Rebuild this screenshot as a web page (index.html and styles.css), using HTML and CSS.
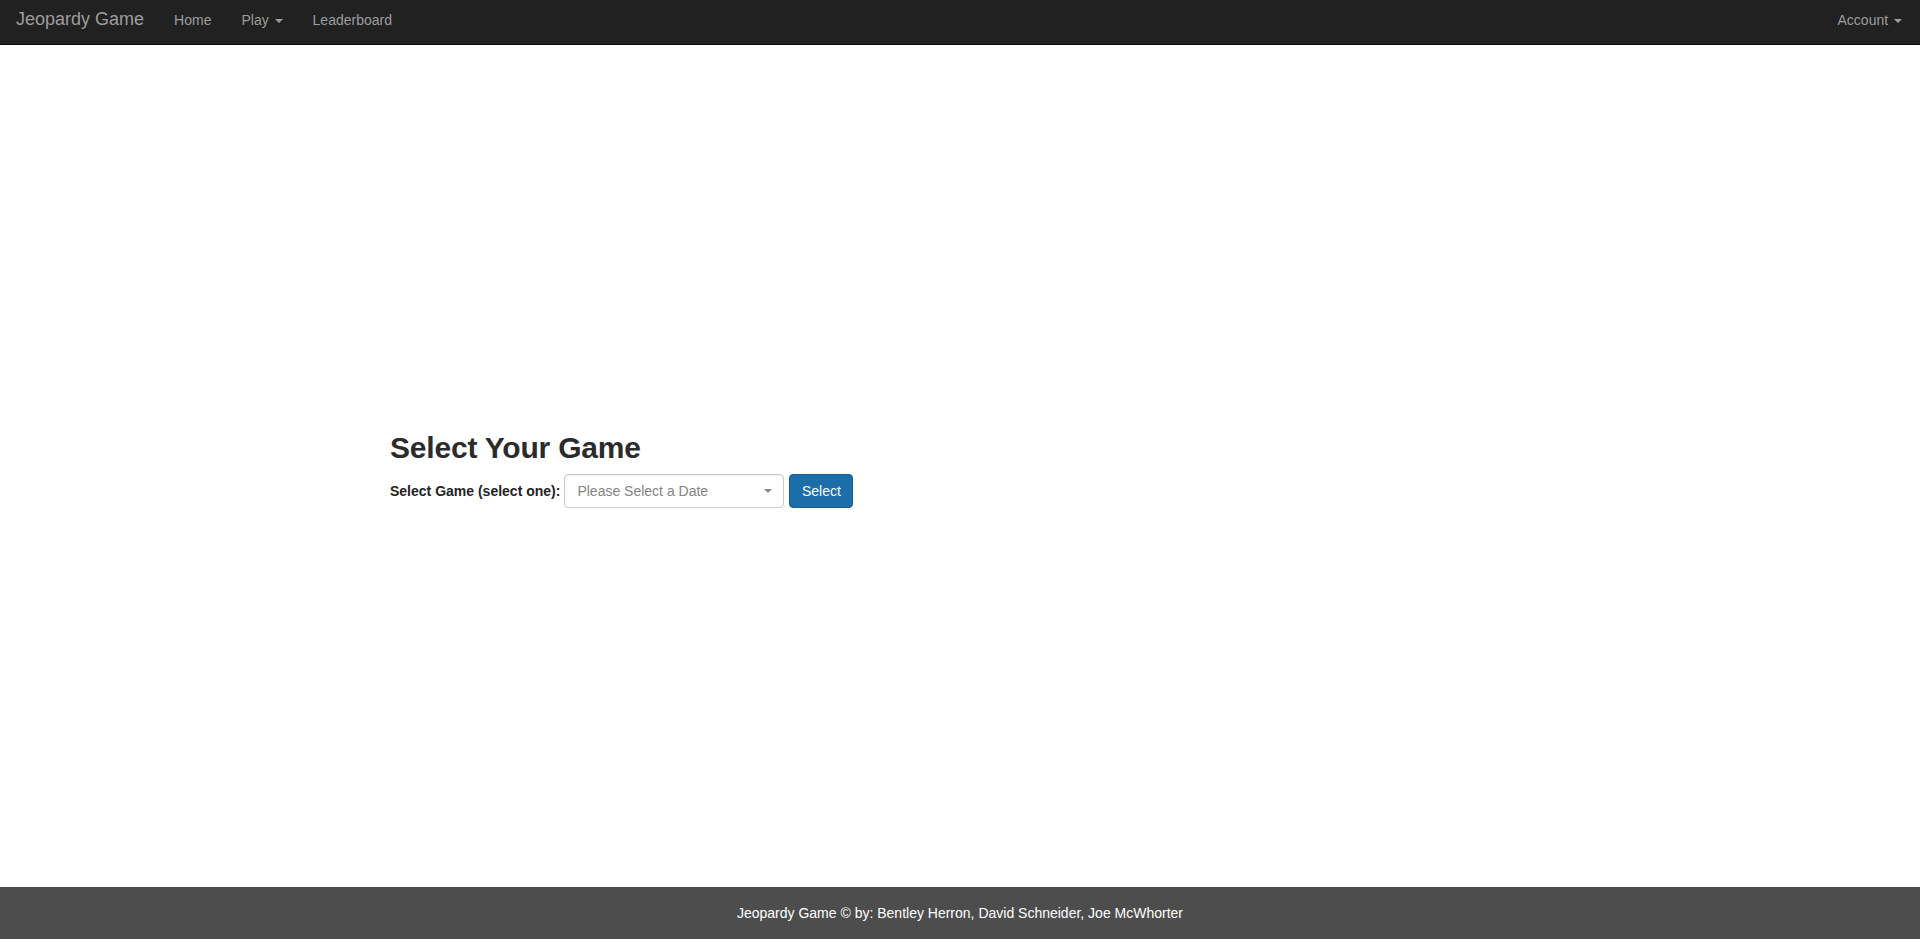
FILE: index.html
```html
<!DOCTYPE html>
<html lang="en">
<head>
<meta charset="utf-8">
<title>Jeopardy Game</title>
<link rel="stylesheet" href="styles.css">
</head>
<body>
<div class="page">
  <nav class="navbar">
    <div class="nav-left">
      <a class="brand" href="#">Jeopardy Game</a>
      <a class="nav-link" href="#">Home</a>
      <a class="nav-link" href="#">Play <span class="caret"></span></a>
      <a class="nav-link" href="#">Leaderboard</a>
    </div>
    <div class="nav-right">
      <a class="nav-link" href="#">Account <span class="caret"></span></a>
    </div>
  </nav>
  <main class="main">
    <div class="container">
      <h2 class="title">Select Your Game</h2>
      <form class="game-form">
        <label class="form-label" for="game">Select Game (select one):</label>
        <span class="select-wrap">
          <select id="game" class="select">
            <option>Please Select a Date</option>
          </select>
        </span>
        <button type="button" class="btn">Select</button>
      </form>
    </div>
  </main>
  <footer class="footer">Jeopardy Game © by: Bentley Herron, David Schneider, Joe McWhorter</footer>
</div>
</body>
</html>
```
FILE: styles.css
```css
* { box-sizing: border-box; }
html, body { margin: 0; padding: 0; height: 100%; }
body {
  font-family: "Liberation Sans", Arial, sans-serif;
  font-size: 14px;
  color: #333;
  background: #fff;
}
.page {
  min-height: 100vh;
  display: flex;
  flex-direction: column;
}
.navbar {
  height: 45px;
  background: #212121;
  border-bottom: 1px solid #0a0a0a;
  display: flex;
  justify-content: space-between;
  align-items: center;
  flex-shrink: 0;
}
.nav-left, .nav-right { display: flex; align-items: center; height: 100%; }
.brand {
  color: #9d9d9d;
  text-decoration: none;
  font-size: 18px;
  padding: 0 15px 0 16px;
  margin-top: -5px;
}
.nav-link {
  color: #9d9d9d;
  text-decoration: none;
  font-size: 14px;
  padding: 0 15px;
  margin-top: -5px;
}
.nav-right .nav-link { padding-right: 18px; }
.caret {
  display: inline-block;
  width: 0;
  height: 0;
  margin-left: 2px;
  vertical-align: middle;
  border-top: 4px solid #9d9d9d;
  border-left: 4px solid transparent;
  border-right: 4px solid transparent;
}
.main {
  flex: 1;
  display: flex;
  align-items: center;
  padding-top: 6px;
}
.container {
  width: 1170px;
  margin: 0 auto;
  padding: 0 15px;
}
.title {
  font-size: 30px;
  font-weight: bold;
  line-height: 1.1;
  margin: 0 0 10px;
  color: #2b2b2b;
  letter-spacing: -0.2px;
}
.game-form { display: flex; align-items: center; }
.form-label {
  font-weight: bold;
  font-size: 14px;
  color: #222;
  margin-right: 4px;
}
.select-wrap {
  position: relative;
  display: inline-block;
  margin-right: 5px;
}
.select-wrap::after {
  content: "";
  position: absolute;
  right: 12px;
  top: 15px;
  border-top: 4px solid #888;
  border-left: 4px solid transparent;
  border-right: 4px solid transparent;
  pointer-events: none;
}
.select {
  -webkit-appearance: none;
  appearance: none;
  width: 220px;
  height: 34px;
  padding: 6px 12px;
  font-family: "Liberation Sans", Arial, sans-serif;
  font-size: 14px;
  color: #858585;
  background: #fff;
  border: 1px solid #ccc;
  border-radius: 4px;
  box-shadow: inset 0 1px 1px rgba(0,0,0,.075);
}
.btn {
  height: 34px;
  width: 64px;
  padding: 6px 10px;
  font-family: "Liberation Sans", Arial, sans-serif;
  font-size: 14px;
  color: #fff;
  background: #1c6eab;
  border: 1px solid #175e94;
  border-radius: 4px;
}
.footer {
  height: 52px;
  flex-shrink: 0;
  background: #4d4d4d;
  color: #fff;
  font-size: 14px;
  display: flex;
  align-items: center;
  justify-content: center;
}
```
